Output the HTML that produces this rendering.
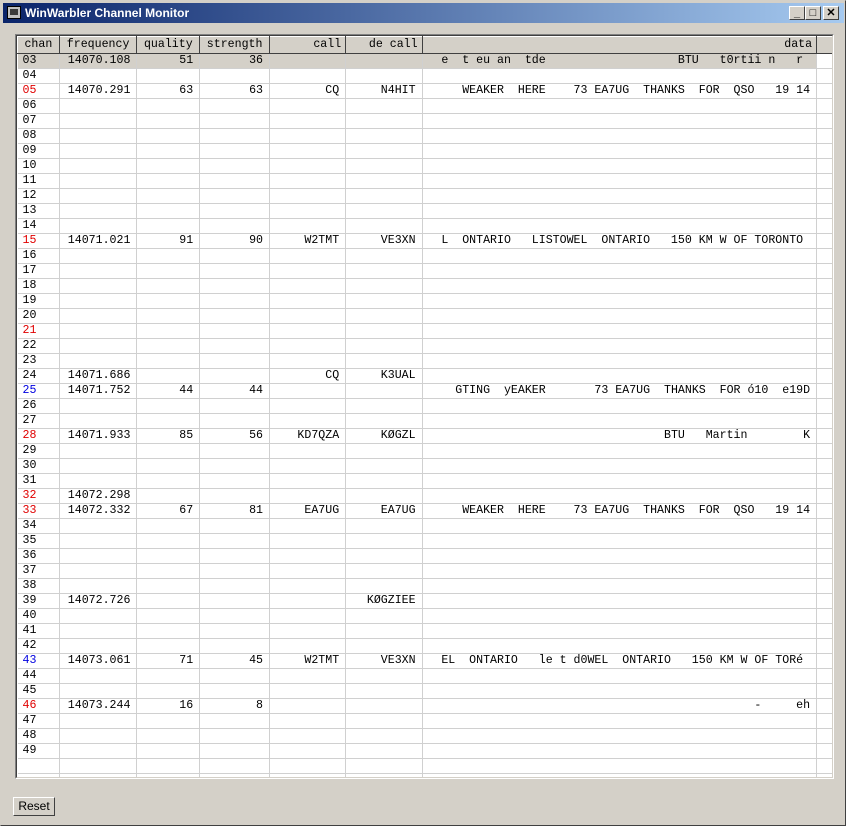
<!DOCTYPE html>
<html><head><meta charset="utf-8">
<style>
*{margin:0;padding:0;box-sizing:border-box}
body{width:846px;height:826px;background:#d4d0c8;position:relative;overflow:hidden;font-family:"Liberation Sans",sans-serif}
.win{position:absolute;left:0;top:0;width:846px;height:826px;border:1px solid #d4d0c8;border-right-color:#404040;border-bottom-color:#404040}
.title{position:absolute;left:2px;top:2px;width:841px;height:20px;background:linear-gradient(to right,#0a246a,#a6caf0)}
.title span{position:absolute;left:22px;top:3px;color:#fff;font-weight:bold;font-size:12px}
.ico{position:absolute;left:4px;top:3px;width:14px;height:13px;background:#c0c0c0;border:1px solid #000}
.ico:after{content:"";position:absolute;left:2px;top:2px;width:8px;height:6px;background:#3a3a3a}
.btn{position:absolute;top:5px;width:16px;height:14px;background:#d4d0c8;border:1px solid;border-color:#fff #404040 #404040 #fff;font-size:11px;font-weight:bold;text-align:center;line-height:12px;color:#000}
.grid{position:absolute;left:14px;top:33px;width:819px;height:745px;background:#fff;border:1px solid;border-color:#808080 #fff #fff #808080;overflow:hidden}
.grid:before{content:"";position:absolute;left:0;top:0;right:0;bottom:0;border:1px solid;border-color:#404040 #d4d0c8 #d4d0c8 #404040;pointer-events:none;z-index:2}
table{position:absolute;left:1px;top:1px;border-collapse:collapse;table-layout:fixed;font-family:"Liberation Mono",monospace;font-size:11.6px;color:#000}
td{height:15px;border-right:1px solid #d0d0d0;border-bottom:1px solid #d0d0d0;white-space:pre;overflow:hidden;padding:0 6px;line-height:14px;text-align:right}
td:first-child{text-align:left;padding-left:5px}
td:nth-child(2){text-align:left;padding-left:8px}
th{height:17px;background:#d4d0c8;font-weight:normal;border:1px solid;border-color:#fff #404040 #404040 #fff;font-size:11.6px;padding:0 4px;line-height:14px}
tr.sel td{background:#d4d0c8}
.r{color:#e00000}.b{color:#0000e0}
.reset{position:absolute;left:12px;top:796px;width:42px;height:19px;border:1px solid;border-color:#fff #404040 #404040 #fff;font-size:12px;text-align:center;line-height:16px;background:#d4d0c8}
</style></head><body>
<div class="win">
<div class="title"><div class="ico"></div><span>WinWarbler Channel Monitor</span></div>
<div class="btn" style="left:788px">_</div>
<div class="btn" style="left:804px">□</div>
<div class="btn" style="left:822px">✕</div>
<div class="grid">
<table>
<colgroup><col style="width:42px"><col style="width:77px"><col style="width:63px"><col style="width:70px"><col style="width:77px"><col style="width:77px"><col style="width:395px"><col style="width:16px"></colgroup>
<tr><th>chan</th><th>frequency</th><th>quality</th><th>strength</th><th style="text-align:right">call</th><th style="text-align:right">de call</th><th style="text-align:right">data</th><th></th></tr>
<tr class="sel"><td>03</td><td>14070.108</td><td>51</td><td>36</td><td></td><td></td><td>e  t eu an  tde                   BTU   t0rtii n   r </td><td style="background:#fff"></td></tr>
<tr><td>04</td><td></td><td></td><td></td><td></td><td></td><td></td><td></td></tr>
<tr><td class="r">05</td><td>14070.291</td><td>63</td><td>63</td><td>CQ</td><td>N4HIT</td><td>WEAKER  HERE    73 EA7UG  THANKS  FOR  QSO   19 14</td><td></td></tr>
<tr><td>06</td><td></td><td></td><td></td><td></td><td></td><td></td><td></td></tr>
<tr><td>07</td><td></td><td></td><td></td><td></td><td></td><td></td><td></td></tr>
<tr><td>08</td><td></td><td></td><td></td><td></td><td></td><td></td><td></td></tr>
<tr><td>09</td><td></td><td></td><td></td><td></td><td></td><td></td><td></td></tr>
<tr><td>10</td><td></td><td></td><td></td><td></td><td></td><td></td><td></td></tr>
<tr><td>11</td><td></td><td></td><td></td><td></td><td></td><td></td><td></td></tr>
<tr><td>12</td><td></td><td></td><td></td><td></td><td></td><td></td><td></td></tr>
<tr><td>13</td><td></td><td></td><td></td><td></td><td></td><td></td><td></td></tr>
<tr><td>14</td><td></td><td></td><td></td><td></td><td></td><td></td><td></td></tr>
<tr><td class="r">15</td><td>14071.021</td><td>91</td><td>90</td><td>W2TMT</td><td>VE3XN</td><td>L  ONTARIO   LISTOWEL  ONTARIO   150 KM W OF TORONTO </td><td></td></tr>
<tr><td>16</td><td></td><td></td><td></td><td></td><td></td><td></td><td></td></tr>
<tr><td>17</td><td></td><td></td><td></td><td></td><td></td><td></td><td></td></tr>
<tr><td>18</td><td></td><td></td><td></td><td></td><td></td><td></td><td></td></tr>
<tr><td>19</td><td></td><td></td><td></td><td></td><td></td><td></td><td></td></tr>
<tr><td>20</td><td></td><td></td><td></td><td></td><td></td><td></td><td></td></tr>
<tr><td class="r">21</td><td></td><td></td><td></td><td></td><td></td><td></td><td></td></tr>
<tr><td>22</td><td></td><td></td><td></td><td></td><td></td><td></td><td></td></tr>
<tr><td>23</td><td></td><td></td><td></td><td></td><td></td><td></td><td></td></tr>
<tr><td>24</td><td>14071.686</td><td></td><td></td><td>CQ</td><td>K3UAL</td><td></td><td></td></tr>
<tr><td class="b">25</td><td>14071.752</td><td>44</td><td>44</td><td></td><td></td><td>GTING  yEAKER       73 EA7UG  THANKS  FOR ó10  e19D</td><td></td></tr>
<tr><td>26</td><td></td><td></td><td></td><td></td><td></td><td></td><td></td></tr>
<tr><td>27</td><td></td><td></td><td></td><td></td><td></td><td></td><td></td></tr>
<tr><td class="r">28</td><td>14071.933</td><td>85</td><td>56</td><td>KD7QZA</td><td>KØGZL</td><td>BTU   Martin        K</td><td></td></tr>
<tr><td>29</td><td></td><td></td><td></td><td></td><td></td><td></td><td></td></tr>
<tr><td>30</td><td></td><td></td><td></td><td></td><td></td><td></td><td></td></tr>
<tr><td>31</td><td></td><td></td><td></td><td></td><td></td><td></td><td></td></tr>
<tr><td class="r">32</td><td>14072.298</td><td></td><td></td><td></td><td></td><td></td><td></td></tr>
<tr><td class="r">33</td><td>14072.332</td><td>67</td><td>81</td><td>EA7UG</td><td>EA7UG</td><td>WEAKER  HERE    73 EA7UG  THANKS  FOR  QSO   19 14</td><td></td></tr>
<tr><td>34</td><td></td><td></td><td></td><td></td><td></td><td></td><td></td></tr>
<tr><td>35</td><td></td><td></td><td></td><td></td><td></td><td></td><td></td></tr>
<tr><td>36</td><td></td><td></td><td></td><td></td><td></td><td></td><td></td></tr>
<tr><td>37</td><td></td><td></td><td></td><td></td><td></td><td></td><td></td></tr>
<tr><td>38</td><td></td><td></td><td></td><td></td><td></td><td></td><td></td></tr>
<tr><td>39</td><td>14072.726</td><td></td><td></td><td></td><td>KØGZIEE</td><td></td><td></td></tr>
<tr><td>40</td><td></td><td></td><td></td><td></td><td></td><td></td><td></td></tr>
<tr><td>41</td><td></td><td></td><td></td><td></td><td></td><td></td><td></td></tr>
<tr><td>42</td><td></td><td></td><td></td><td></td><td></td><td></td><td></td></tr>
<tr><td class="b">43</td><td>14073.061</td><td>71</td><td>45</td><td>W2TMT</td><td>VE3XN</td><td>EL  ONTARIO   le t d0WEL  ONTARIO   150 KM W OF TORé </td><td></td></tr>
<tr><td>44</td><td></td><td></td><td></td><td></td><td></td><td></td><td></td></tr>
<tr><td>45</td><td></td><td></td><td></td><td></td><td></td><td></td><td></td></tr>
<tr><td class="r">46</td><td>14073.244</td><td>16</td><td>8</td><td></td><td></td><td>-     eh</td><td></td></tr>
<tr><td>47</td><td></td><td></td><td></td><td></td><td></td><td></td><td></td></tr>
<tr><td>48</td><td></td><td></td><td></td><td></td><td></td><td></td><td></td></tr>
<tr><td>49</td><td></td><td></td><td></td><td></td><td></td><td></td><td></td></tr>
<tr><td></td><td></td><td></td><td></td><td></td><td></td><td></td><td></td></tr>
<tr><td></td><td></td><td></td><td></td><td></td><td></td><td></td><td></td></tr>
</table>
</div>
<div class="reset">Reset</div>
</div>
</body></html>
